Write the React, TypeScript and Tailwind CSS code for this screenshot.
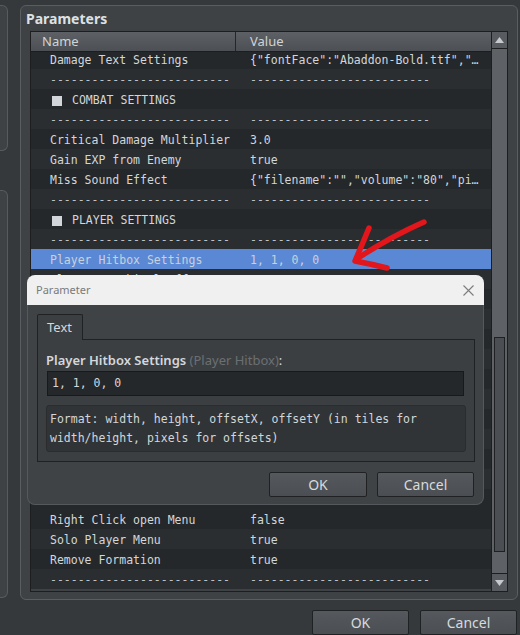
import React from "react";

type Row =
  | { kind: "item"; name: string; value: string; selected?: boolean }
  | { kind: "section"; name: string }
  | { kind: "dash" }
  | { kind: "blank" };

const DASH: Row = { kind: "dash" };
const BLANK: Row = { kind: "blank" };
const DASHES = "--------------------------";

// rows sitting behind the open dialog are left blank
const rows: Row[] = [
  { kind: "item", name: "Damage Text Settings", value: '{"fontFace":"Abaddon-Bold.ttf","…' },
  DASH,
  { kind: "section", name: "COMBAT SETTINGS" },
  DASH,
  { kind: "item", name: "Critical Damage Multiplier", value: "3.0" },
  { kind: "item", name: "Gain EXP from Enemy", value: "true" },
  { kind: "item", name: "Miss Sound Effect", value: '{"filename":"","volume":"80","pi…' },
  DASH,
  { kind: "section", name: "PLAYER SETTINGS" },
  DASH,
  { kind: "item", name: "Player Hitbox Settings", value: "1, 1, 0, 0", selected: true },
  { kind: "item", name: "Player Graphical Offset", value: "0, 0" },
  BLANK,
  BLANK,
  BLANK,
  BLANK,
  BLANK,
  BLANK,
  BLANK,
  BLANK,
  BLANK,
  BLANK,
  BLANK,
  { kind: "item", name: "Right Click open Menu", value: "false" },
  { kind: "item", name: "Solo Player Menu", value: "true" },
  { kind: "item", name: "Remove Formation", value: "true" },
  DASH,
];

function ListRow({ row, index }: { row: Row; index: number }) {
  const selected = row.kind === "item" && row.selected;
  const parity = (index + (index >= 23 ? 1 : 0)) % 2;
  const bg = selected ? "bg-[#5a88d4]" : parity === 0 ? "bg-[#25282b]" : "bg-[#2b2e31]";
  const text = selected ? "text-[#c9d1dc]" : "text-[#d2d6da]";
  return (
    <div className={`flex h-[20px] items-center whitespace-pre pt-[4px] ${bg} ${text}`}>
      <div className="flex w-[219px] shrink-0 items-center pl-[19px]">
        {row.kind === "dash" && <span className="text-[#bfc3c7]">{DASHES}</span>}
        {row.kind === "item" && <span>{row.name}</span>}
        {row.kind === "section" && (
          <>
            <span className="ml-[2px] mr-[10px] inline-block h-[10px] w-[10px] bg-[#d2d6da]" />
            <span>{row.name}</span>
          </>
        )}
      </div>
      <div className="min-w-0 flex-1 overflow-hidden">
        {row.kind === "dash" && <span className="text-[#bfc3c7]">{DASHES}</span>}
        {row.kind === "item" && <span>{row.value}</span>}
      </div>
    </div>
  );
}

function Triangle({ down }: { down?: boolean }) {
  return (
    <svg width="9" height="7" viewBox="0 0 9 7">
      <polygon points={down ? "0,1 9,1 4.5,7" : "0,6 9,6 4.5,0"} fill="#c6cacd" />
    </svg>
  );
}

function Button({ label, className = "" }: { label: string; className?: string }) {
  return (
    <div
      className={`flex h-[25px] w-[97px] items-center justify-center rounded-[2px] border border-[#1f2123] bg-gradient-to-b from-[#55595d] to-[#4b4f53] text-[14px] text-[#d6dadd] ${className}`}
    >
      {label}
    </div>
  );
}

export default function App() {
  return (
    <div className="relative h-[635px] w-[520px] overflow-hidden bg-[#36393c] font-['Noto_Sans',sans-serif]">
      <div className="flex h-[600px] pt-[5px]">
        {/* neighbouring panels, cut off at the window edge */}
        <div className="flex w-[8px] shrink-0 flex-col">
          <div className="h-[146px] rounded-r-[6px] border border-l-0 border-[#575b5f] bg-[#3f4245]" />
          <div className="mt-[39px] h-[408px] rounded-r-[6px] border border-l-0 border-[#575b5f] bg-[#3f4245]" />
        </div>

        {/* Parameters panel */}
        <div className="ml-[12px] flex w-[498px] flex-col rounded-[6px] border border-[#5a5e62] bg-[#3f4245] pb-[7px] pl-[9px] pr-[9px]">
          <div className="flex h-[25px] items-center">
            <span className="-ml-[4px] text-[14px] font-bold text-[#dde1e4]">Parameters</span>
          </div>

          <div className="flex h-[561px] border border-[#1c1e20] font-['DejaVu_Sans_Mono',monospace] text-[11.5px]">
            <div className="flex min-w-0 flex-1 flex-col">
              <div className="flex h-[20px] shrink-0 items-center border-b border-[#1c1e20] bg-gradient-to-b from-[#5d6165] to-[#4c5054] font-['Noto_Sans',sans-serif] text-[13px] text-[#d0d4d8]">
                <div className="flex h-full w-[205px] items-center border-r border-[#24272a] pl-[11px]">Name</div>
                <div className="pl-[14px]">Value</div>
              </div>
              <div className="relative flex-1 overflow-hidden">
                <div className="-mt-[3px]">
                  {rows.map((r, i) => (
                    <ListRow key={i} row={r} index={i} />
                  ))}
                </div>
              </div>
            </div>

            <div className="flex w-[16px] shrink-0 flex-col border-l border-[#1c1e20] bg-[#5e6266]">
              <div className="flex h-[17px] items-center justify-center border-b border-[#1c1e20] bg-[#585c60]">
                <Triangle />
              </div>
              <div className="flex-1 px-[2px] pt-[288px]">
                <div className="h-[215px] border border-[#1e2022] bg-[#4b4f53]" />
              </div>
              <div className="flex h-[18px] items-center justify-center border-t border-[#1c1e20] bg-[#585c60]">
                <Triangle down />
              </div>
            </div>
          </div>
        </div>
      </div>

      <div className="flex justify-end gap-[11px] pr-[3px] pt-[10px]">
        <Button label="OK" />
        <Button label="Cancel" />
      </div>

      {/* red annotation arrow */}
      <svg className="absolute left-0 top-0" width="520" height="635" viewBox="0 0 520 635" fill="none">
        <path d="M424 222 Q392 236 358 258" stroke="#e3161b" strokeWidth="5.5" strokeLinecap="round" />
        <path d="M369 228 Q362 245 355 261 Q371 264 387 268" stroke="#e3161b" strokeWidth="5.5" strokeLinecap="round" strokeLinejoin="round" />
      </svg>

      {/* Parameter dialog */}
      <div className="absolute left-[27px] top-[275px] flex h-[230px] w-[457px] flex-col">
        <div className="flex h-[30px] items-center justify-between rounded-t-[8px] bg-[#f0f0f0] pl-[9px] pr-[10px]">
          <span className="text-[11px] text-[#7a7a7a]">Parameter</span>
          <svg width="11" height="11" viewBox="0 0 11 11">
            <path d="M0.5 0.5 L10.5 10.5 M10.5 0.5 L0.5 10.5" stroke="#7c7c7c" strokeWidth="1.1" />
          </svg>
        </div>
        <div className="flex flex-1 flex-col rounded-b-[8px] border border-t-0 border-[#55595d] bg-[#404346] pl-[9px] pr-[8px] pt-[9px]">
          <div className="relative z-10 -mb-[1px] flex h-[26px] w-[46px] items-center rounded-t-[2px] border border-b-0 border-[#1f2123] bg-[#3c3f42] pl-[9px] text-[13px] text-[#d4d8dc]">
            Text
          </div>
          <div className="flex h-[123px] w-[438px] flex-col border border-[#1f2123] bg-[#3c3f42] pl-[8px] pt-[12px]">
            <div className="h-[16px] whitespace-nowrap text-[13px] leading-[16px] text-[#d4d8dc]">
              <span className="font-semibold">Player Hitbox Settings</span>{" "}
              <span className="text-[#6b6f73]">(Player Hitbox)</span>
              <span>:</span>
            </div>
            <div className="ml-[1px] mt-[3px] flex h-[25px] w-[417px] items-center border border-[#17191b] bg-[#25282b] pl-[4px] font-['DejaVu_Sans_Mono',monospace] text-[11.5px] text-[#d2d6da]">
              1, 1, 0, 0
            </div>
            <div className="mt-[9px] flex h-[47px] w-[420px] flex-col rounded-[3px] border border-[#2a2c2e] bg-[#313437] pl-[3px] pt-[4px] font-['DejaVu_Sans_Mono',monospace] text-[11.5px] leading-[19px] text-[#d2d6da]">
              <span>Format: width, height, offsetX, offsetY (in tiles for</span>
              <span>width/height, pixels for offsets)</span>
            </div>
          </div>
          <div className="mt-[10px] flex justify-end gap-[10px] pr-[1px]">
            <Button label="OK" className="w-[98px]" />
            <Button label="Cancel" />
          </div>
        </div>
      </div>
    </div>
  );
}
